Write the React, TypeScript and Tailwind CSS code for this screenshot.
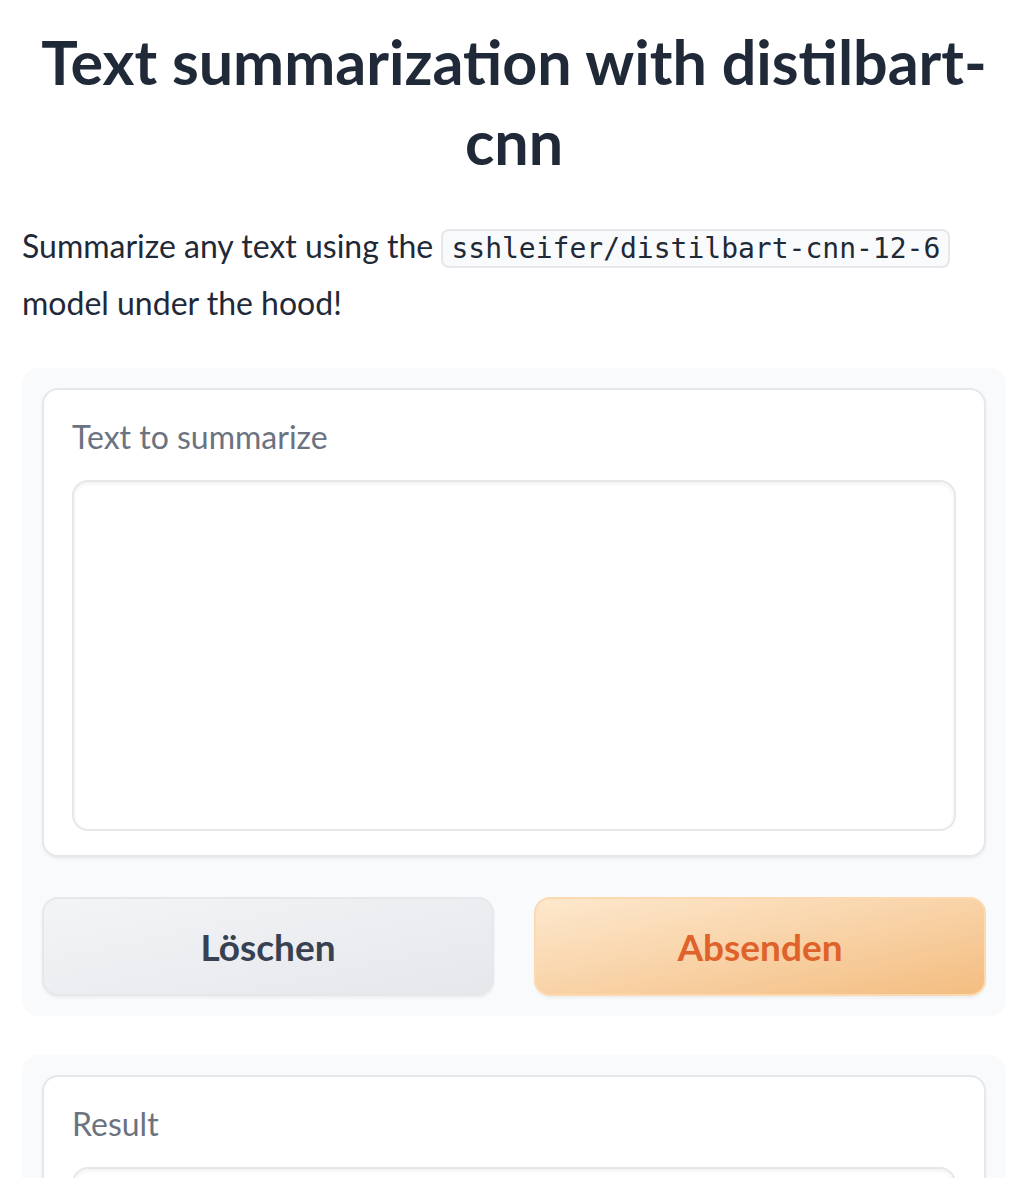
import React from "react";

const Field = ({ label, height }: { label: string; height: string }) => (
    <div className="rounded-2xl border-2 border-[#e5e7eb] bg-white px-[28px] pt-[27px] pb-[24px] shadow-[0_2px_3px_rgba(0,0,0,0.05)]">
        <label className="block text-[32px] leading-[40px] text-[#6b7280]">{label}</label>
        <textarea
            className={`mt-[23px] block w-full resize-none rounded-2xl border-2 border-[#e5e7eb] bg-white shadow-[inset_0_2px_4px_rgba(0,0,0,0.06)] outline-none ${height}`}
        />
    </div>
);

const App = () => {
    return (
        <div className="min-h-screen bg-white px-[22px] pr-[24px] font-['Lato',sans-serif] text-[#1f2937]">
            <h1 className="pt-[22px] text-center text-[61px] font-bold leading-[80px] text-[#1f2937]">
                Text summarization with distilbart-cnn
            </h1>

            <p className="mt-[37px] text-[32px] leading-[54px] text-[#1f2937]">
                Summarize any text using the{" "}
                <code className="rounded-lg border-2 border-[#e5e7eb] bg-[#f9fafb] px-[8px] py-[1px] font-['DejaVu_Sans_Mono',monospace] text-[28px]">
                    sshleifer/distilbart-cnn-12-6
                </code>{" "}
                model under the hood!
            </p>

            <div className="mt-[38px] rounded-2xl bg-[#f9fafb] p-[20px]">
                <Field label="Text to summarize" height="h-[351px]" />
                <div className="mt-[40px] grid grid-cols-2 gap-[40px]">
                    <button className="h-[99px] rounded-2xl border-2 border-[#e5e7eb] bg-gradient-to-br from-[#f3f4f6] to-[#e5e7eb] text-[37px] font-bold text-[#374151] shadow-[0_2px_3px_rgba(0,0,0,0.05)]">
                        Löschen
                    </button>
                    <button className="h-[99px] rounded-2xl border-2 border-[#fcd9b0] bg-gradient-to-br from-[#fde8cd] to-[#f3bd80] text-[37px] font-bold text-[#e0622b] shadow-[0_2px_3px_rgba(0,0,0,0.05)]">
                        Absenden
                    </button>
                </div>
            </div>

            <div className="mt-[39px] rounded-2xl bg-[#f9fafb] p-[20px]">
                <Field label="Result" height="h-[200px]" />
            </div>
        </div>
    );
};

export default App;
